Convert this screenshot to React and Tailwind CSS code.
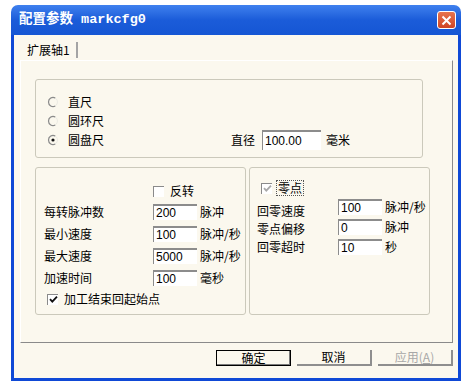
const CJK = "font-['Noto_Sans_CJK_SC',sans-serif]";
const NUM = "font-['Liberation_Sans','Noto_Sans_CJK_SC',sans-serif]";

function Radio({ checked }) {
  return (
    <svg width="12" height="12" viewBox="0 0 12 12" className="shrink-0">
      <circle cx="6" cy="6" r="4.5" fill="none" stroke="#ecebe4" strokeWidth="1" />
      <path d="M8.25 2.1 A4.5 4.5 0 1 0 8.25 9.9" fill="none" stroke="#8a8a8a" strokeWidth="1.2" />
      {checked && <circle cx="6" cy="6" r="1.6" fill="#111" />}
    </svg>
  );
}

function Check({ checked, disabled }) {
  return (
    <div className="w-[11px] h-[11px] shrink-0 bg-white border-t-[1.5px] border-l-[1.5px] border-[#8a8a8a] flex items-center justify-center">
      {checked && (
        <svg width="9" height="9" viewBox="0 0 9 9">
          <path d="M1 4.2 L3.3 6.6 L8 1.6" fill="none" stroke={disabled ? "#a8a8a8" : "#111"} strokeWidth="1.8" />
        </svg>
      )}
    </div>
  );
}

function Input({ value, w = "w-[44px]", h = "h-[16px]" }) {
  return (
    <div
      className={`${w} ${h} shrink-0 bg-white border-t-[2px] border-l-[1.5px] border-[#8c8c8c] flex items-center pl-[2px] text-[12px] leading-none text-black ${NUM}`}
    >
      {value}
    </div>
  );
}

export default function App() {
  return (
    <div className={`w-[472px] h-[384px] bg-white pt-[5px] pl-[11px] ${CJK}`}>
      <div className="flex flex-col w-[450px] h-[376px]">
        {/* Title bar */}
        <div className="h-[30px] shrink-0 rounded-t-[7px] bg-linear-to-b from-[#3f80ee] via-[#1b5cd9] to-[#1556d4] flex items-center pl-[8px] pr-[5px]">
          <span className="text-white font-bold text-[13.5px] leading-none font-['Liberation_Mono','Noto_Sans_CJK_SC',monospace] whitespace-pre">
            配置参数 markcfg0
          </span>
          <div className="ml-auto w-[19px] h-[18px] rounded-[3px] border border-white bg-linear-to-b from-[#e6744f] to-[#cf4424] flex items-center justify-center">
            <svg width="11" height="11" viewBox="0 0 11 11">
              <path d="M1.5 1.5 L9.5 9.5 M9.5 1.5 L1.5 9.5" stroke="white" strokeWidth="2" />
            </svg>
          </div>
        </div>

        {/* Body */}
        <div className="flex-1 flex flex-col bg-[#fbf8ee] border-x-[3px] border-b-[3px] border-[#0f49d6] pl-[6px] pr-[5px] pt-[5px]">
          {/* Tab header */}
          <div className="h-[20px] flex items-center shrink-0">
            <div className="w-[58px] h-[16px] flex items-center pl-[7px] border-r-[2px] border-[#a4a4a4] text-[12px] leading-none text-black">
              扩展轴1
            </div>
          </div>

          {/* Tab page */}
          <div className="h-[283px] shrink-0 border border-white border-r-[#8a8a8a] border-b-[#8a8a8a] pl-[14px] pt-[18px] flex flex-col text-[12px] leading-none text-black">
            {/* Group 1 */}
            <div className="w-[388px] h-[79px] border border-[#cbc9bb] rounded-[3px] pt-[12px] flex flex-col">
              <div className="h-[19px] flex items-center pl-[11px]">
                <Radio />
                <span className="ml-[9px]">直尺</span>
              </div>
              <div className="h-[19px] flex items-center pl-[11px]">
                <Radio />
                <span className="ml-[9px]">圆环尺</span>
              </div>
              <div className="h-[19px] flex items-center pl-[11px]">
                <div className="w-[184px] flex items-center">
                  <Radio checked />
                  <span className="ml-[9px]">圆盘尺</span>
                </div>
                <span>直径</span>
                <div className="ml-[7px]">
                  <Input value="100.00" w="w-[59px]" h="h-[20px]" />
                </div>
                <span className="ml-[5px]">毫米</span>
              </div>
            </div>

            {/* Lower groups */}
            <div className="flex gap-[3px] mt-[9px]">
              <div className="w-[211px] h-[148px] border border-[#cbc9bb] rounded-[3px] pt-[15px] flex flex-col">
                <div className="h-[16px] flex items-center pl-[117px]">
                  <Check />
                  <span className="ml-[6px]">反转</span>
                </div>
                <div className="mt-[2px] flex flex-col">
                  {[
                    ["每转脉冲数", "200", "脉冲"],
                    ["最小速度", "100", "脉冲/秒"],
                    ["最大速度", "5000", "脉冲/秒"],
                    ["加速时间", "100", "毫秒"],
                  ].map(([label, val, unit]) => (
                    <div key={label} className="h-[22px] flex items-center pl-[8px]">
                      <span className="w-[109px]">{label}</span>
                      <Input value={val} />
                      <span className="ml-[3px]">{unit}</span>
                    </div>
                  ))}
                </div>
                <div className="h-[20px] flex items-center pl-[11px]">
                  <Check checked />
                  <span className="ml-[6px]">加工结束回起始点</span>
                </div>
              </div>

              <div className="w-[181px] h-[148px] border border-[#cbc9bb] rounded-[3px] pt-[12px] flex flex-col">
                <div className="h-[16px] flex items-center pl-[11px]">
                  <Check checked disabled />
                  <span className="ml-[4px] border border-dotted border-[#555] px-[1px] h-[16px] flex items-center">零点</span>
                </div>
                <div className="flex mt-[1px]">
                  <div className="w-[88px] pl-[7px] pt-[5px] flex flex-col">
                    {["回零速度", "零点偏移", "回零超时"].map((l) => (
                      <div key={l} className="h-[18px] flex items-center">{l}</div>
                    ))}
                  </div>
                  <div className="flex flex-col">
                    {[
                      ["100", "脉冲/秒"],
                      ["0", "脉冲"],
                      ["10", "秒"],
                    ].map(([v, u]) => (
                      <div key={u} className="h-[20px] flex items-center">
                        <Input value={v} />
                        <span className="ml-[3px]">{u}</span>
                      </div>
                    ))}
                  </div>
                </div>
              </div>
            </div>
          </div>

          {/* Buttons */}
          <div className="flex justify-end gap-[6px] mt-[7px] text-[12px] leading-none">
            <div className="w-[75px] h-[16px] border border-black shadow-[inset_-1px_-1px_0_#7a7a7a] flex items-center justify-center text-black">
              确定
            </div>
            <div className="w-[75px] h-[16px] border-r-[2px] border-b-[2px] border-[#8e8e8e] flex items-center justify-center text-black">
              取消
            </div>
            <div className="w-[75px] h-[16px] border-r-[2px] border-b-[2px] border-[#8e8e8e] flex items-center justify-center text-[#a8a8a8]">
              应用(<span className="underline">A</span>)
            </div>
          </div>
        </div>
      </div>
    </div>
  );
}
